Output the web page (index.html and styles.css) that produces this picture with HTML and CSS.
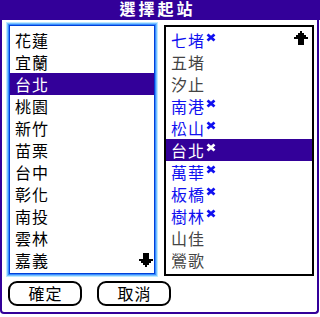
FILE: index.html
```html
<!DOCTYPE html>
<html lang="zh-Hant">
<head>
<meta charset="utf-8">
<link rel="stylesheet" href="styles.css">
</head>
<body>
<div class="screen">
  <div class="title"><span class="title-text">選擇起站</span></div>
  <div class="frame">
    <div class="lists">
      <div class="list list-left">
        <div class="row"><span class="name">花蓮</span></div>
        <div class="row"><span class="name">宜蘭</span></div>
        <div class="row sel"><span class="name">台北</span></div>
        <div class="row"><span class="name">桃園</span></div>
        <div class="row"><span class="name">新竹</span></div>
        <div class="row"><span class="name">苗栗</span></div>
        <div class="row"><span class="name">台中</span></div>
        <div class="row"><span class="name">彰化</span></div>
        <div class="row"><span class="name">南投</span></div>
        <div class="row"><span class="name">雲林</span></div>
        <div class="row"><span class="name">嘉義</span></div>
        <svg class="arrow arrow-down" width="14" height="14" viewBox="0 0 14 14"><path d="M6 14H8V12H10V10H12V8H14V6H10V0H4V6H0V8H2V10H4V12H6Z" fill="#000"/></svg>
      </div>
      <div class="list list-right">
        <div class="row blue"><span class="name">七堵</span><svg class="mark" width="10" height="9" viewBox="0 0 10 9"><path d="M1.5 1.5L8.5 7.5M8.5 1.5L1.5 7.5" stroke="currentColor" stroke-width="2.8"/></svg></div>
        <div class="row gray"><span class="name">五堵</span></div>
        <div class="row gray"><span class="name">汐止</span></div>
        <div class="row blue"><span class="name">南港</span><svg class="mark" width="10" height="9" viewBox="0 0 10 9"><path d="M1.5 1.5L8.5 7.5M8.5 1.5L1.5 7.5" stroke="currentColor" stroke-width="2.8"/></svg></div>
        <div class="row blue"><span class="name">松山</span><svg class="mark" width="10" height="9" viewBox="0 0 10 9"><path d="M1.5 1.5L8.5 7.5M8.5 1.5L1.5 7.5" stroke="currentColor" stroke-width="2.8"/></svg></div>
        <div class="row sel"><span class="name">台北</span><svg class="mark" width="10" height="9" viewBox="0 0 10 9"><path d="M1.5 1.5L8.5 7.5M8.5 1.5L1.5 7.5" stroke="currentColor" stroke-width="2.8"/></svg></div>
        <div class="row blue"><span class="name">萬華</span><svg class="mark" width="10" height="9" viewBox="0 0 10 9"><path d="M1.5 1.5L8.5 7.5M8.5 1.5L1.5 7.5" stroke="currentColor" stroke-width="2.8"/></svg></div>
        <div class="row blue"><span class="name">板橋</span><svg class="mark" width="10" height="9" viewBox="0 0 10 9"><path d="M1.5 1.5L8.5 7.5M8.5 1.5L1.5 7.5" stroke="currentColor" stroke-width="2.8"/></svg></div>
        <div class="row blue"><span class="name">樹林</span><svg class="mark" width="10" height="9" viewBox="0 0 10 9"><path d="M1.5 1.5L8.5 7.5M8.5 1.5L1.5 7.5" stroke="currentColor" stroke-width="2.8"/></svg></div>
        <div class="row gray"><span class="name">山佳</span></div>
        <div class="row gray"><span class="name">鶯歌</span></div>
        <svg class="arrow arrow-up" width="14" height="14" viewBox="0 0 14 14"><path d="M6 0H8V2H10V4H12V6H14V8H10V14H4V8H0V6H2V4H4V2H6Z" fill="#000"/></svg>
      </div>
    </div>
    <div class="buttons">
      <div class="btn">確定</div>
      <div class="btn">取消</div>
    </div>
  </div>
</div>
</body>
</html>
```
FILE: styles.css
```css
html, body {
  margin: 0;
  padding: 0;
  background: #ffffff;
}
body {
  font-family: "Noto Sans CJK TC", "Noto Sans CJK SC", sans-serif;
  width: 320px;
  height: 317px;
  overflow: hidden;
}
.screen {
  width: 320px;
}
.title {
  height: 20px;
  background: #330099;
  color: #ffffff;
  display: flex;
  justify-content: center;
  padding-right: 5px;
  box-sizing: border-box;
}
.title-text {
  font-family: "Liberation Sans", "Noto Sans CJK TC", sans-serif;
  font-size: 16px;
  font-weight: 700;
  line-height: 19px;
  letter-spacing: 3px;
}
.frame {
  width: 319px;
  height: 294px;
  box-sizing: border-box;
  border: 2px solid #330099;
  border-top: 0;
  border-bottom-left-radius: 4px;
  border-bottom-right-radius: 4px;
}
.lists {
  display: flex;
  align-items: flex-start;
  padding-top: 5px;
}
.list {
  position: relative;
  box-sizing: border-box;
  background: #ffffff;
}
.list-left {
  margin-left: 7px;
  width: 146px;
  height: 249px;
  border: 1px solid #0040d8;
  box-shadow: 0 0 0 1px #3a8cff, 0 0 0 2px #78c0ff, 0 0 0 3px #bdeaff;
  padding-top: 3px;
}
.list-right {
  margin-left: 9px;
  width: 150px;
  height: 251px;
  border: 2px solid #000000;
  padding-top: 2px;
}
.row {
  height: 22px;
  line-height: 22px;
  font-size: 16px;
  padding-left: 5px;
  color: #000000;
  white-space: nowrap;
}
.name {
  letter-spacing: 1px;
}
.row.blue {
  color: #1010f0;
}
.row.gray {
  color: #444444;
}
.row.sel {
  background: #330099;
  color: #ffffff;
}
.mark {
  display: inline-block;
  vertical-align: top;
  margin-top: 4px;
  margin-left: 1px;
}
.arrow {
  position: absolute;
}
.arrow-down {
  right: 1px;
  bottom: 6px;
}
.arrow-up {
  right: 4px;
  top: 4px;
}
.buttons {
  display: flex;
  gap: 15px;
  padding-left: 6px;
  margin-top: 5px;
}
.btn {
  width: 74px;
  height: 25px;
  box-sizing: border-box;
  border: 2px solid #000000;
  border-radius: 9px;
  font-size: 16px;
  line-height: 20px;
  text-align: center;
  letter-spacing: 1px;
  padding-left: 1px;
  color: #000000;
}
```
